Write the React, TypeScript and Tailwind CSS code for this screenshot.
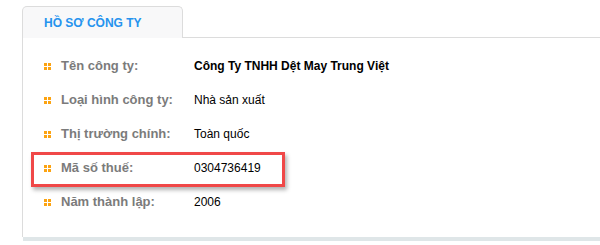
const rows = [
  { label: 'Tên công ty:', value: 'Công Ty TNHH Dệt May Trung Việt', bold: true },
  { label: 'Loại hình công ty:', value: 'Nhà sản xuất' },
  { label: 'Thị trường chính:', value: 'Toàn quốc' },
  { label: 'Mã số thuế:', value: '0304736419', highlight: true },
  { label: 'Năm thành lập:', value: '2006' },
];

function Bullet() {
  return (
    <span className="grid grid-cols-2 gap-[1px] w-[7px] h-[7px] shrink-0">
      <span className="bg-[#fca311]" />
      <span className="bg-[#fca311]" />
      <span className="bg-[#fca311]" />
      <span className="bg-[#fca311]" />
    </span>
  );
}

export default function App() {
  return (
    <div
      className="w-[600px] h-[245px] bg-white pl-[22px] pt-[6px] overflow-hidden"
      style={{ fontFamily: '"Liberation Sans", Arial, sans-serif' }}
    >
      {/* Tab header */}
      <div className="flex items-end">
        <div className="w-[161px] h-[32px] border border-b-0 border-[#dcdcdc] rounded-t-[5px] bg-[#f8f8f9] flex items-center pl-[21px]">
          <span className="text-[12px] font-bold text-[#2693ee] leading-none">HỒ SƠ CÔNG TY</span>
        </div>
        <div className="flex-1 border-b border-[#dcdcdc]" />
      </div>

      {/* Body */}
      <div className="border-l border-[#dcdcdc] h-[199px] pt-[11px] pl-[21px]">
        {rows.map((row) => (
          <div key={row.label} className="relative flex items-center h-[34px]">
            {row.highlight && (
              <div className="absolute left-[-13px] top-[1px] w-[254px] h-[35px] border-[3px] border-[#f04848] shadow-[2px_3px_4px_rgba(0,0,0,0.3)]" />
            )}
            <Bullet />
            <span className="ml-[10px] w-[133px] text-[13px] font-bold text-[#7b7b7b]">{row.label}</span>
            <span className={`text-[12px] text-black ${row.bold ? 'font-bold' : ''}`}>{row.value}</span>
          </div>
        ))}
      </div>
      <div className="h-[4px] ml-[1px] bg-[#dfe6e8]" />
    </div>
  );
}
